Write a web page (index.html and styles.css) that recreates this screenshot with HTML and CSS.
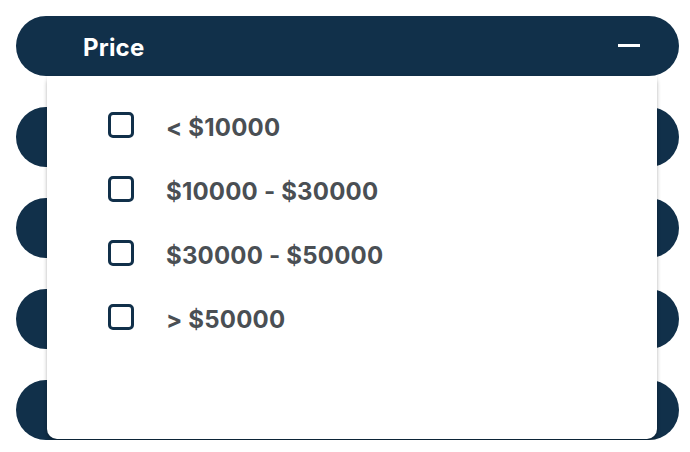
FILE: index.html
```html
<!DOCTYPE html>
<html>
<head>
<meta charset="utf-8">
<link rel="stylesheet" href="styles.css">
</head>
<body>
<div class="accordion">
  <div class="item open">
    <div class="header">
      <span class="title">Price</span>
      <span class="minus"></span>
    </div>
    <div class="panel">
      <label class="row"><span class="box"></span><span class="label">&lt; $10000</span></label>
      <label class="row"><span class="box"></span><span class="label">$10000 - $30000</span></label>
      <label class="row"><span class="box"></span><span class="label">$30000 - $50000</span></label>
      <label class="row"><span class="box"></span><span class="label">&gt; $50000</span></label>
    </div>
  </div>
  <div class="item"><div class="header"></div></div>
  <div class="item"><div class="header"></div></div>
  <div class="item"><div class="header"></div></div>
  <div class="item"><div class="header"></div></div>
</div>
</body>
</html>
```
FILE: styles.css
```css
html, body {
  margin: 0;
  padding: 0;
  background: #ffffff;
}
body {
  padding: 16px 11px 0 16px;
  font-family: "Inter", "Lato", sans-serif;
}
.accordion {
  width: 663px;
  display: flex;
  flex-direction: column;
  gap: 31px;
}
.item {
  position: relative;
}
.header {
  height: 60px;
  background: #11304a;
  border-radius: 30px;
  display: flex;
  align-items: center;
  justify-content: space-between;
  padding: 0 39px 0 67px;
  box-sizing: border-box;
}
.title {
  color: #ffffff;
  font-weight: 700;
  font-size: 24px;
  letter-spacing: 0.2px;
  margin-top: 3px;
}
.minus {
  width: 22px;
  height: 3px;
  background: #ffffff;
  margin-top: -1px;
}
.panel {
  position: absolute;
  top: 60px;
  left: 31px;
  width: 610px;
  height: 363px;
  background: #ffffff;
  border-radius: 0 0 10px 10px;
  box-shadow: 0 5px 4px rgba(0, 0, 0, 0.22), 0 0 3px rgba(0, 0, 0, 0.1);
  z-index: 2;
  padding: 17px 0 0 61px;
  box-sizing: border-box;
  display: flex;
  flex-direction: column;
}
.row {
  height: 64px;
  display: flex;
  align-items: center;
  gap: 32px;
}
.box {
  width: 26px;
  height: 26px;
  border: 3px solid #11304a;
  border-radius: 5px;
  box-sizing: border-box;
}
.label {
  color: #4a4f54;
  font-weight: 700;
  font-size: 24px;
  letter-spacing: 0.2px;
  margin-top: 4px;
}
```
